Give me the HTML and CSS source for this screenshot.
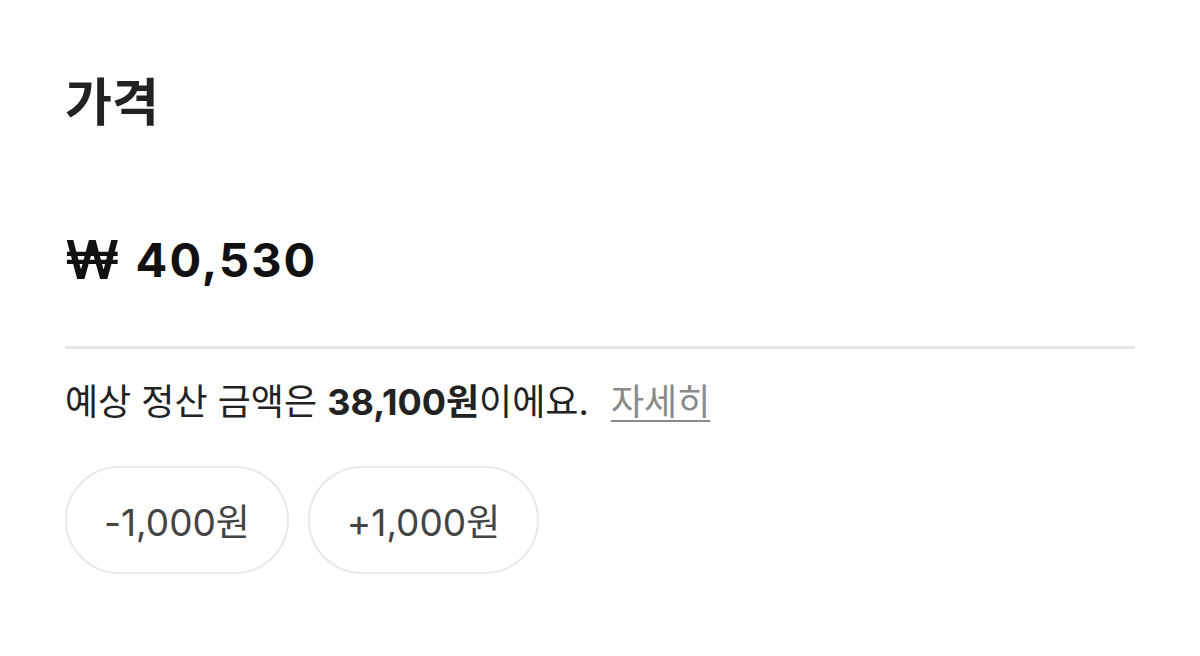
FILE: index.html
```html
<!DOCTYPE html>
<html lang="ko">
<head>
<meta charset="utf-8">
<title>가격</title>
<link rel="stylesheet" href="styles.css">
</head>
<body>
<main class="price-section">
  <h1 class="title">가격</h1>
  <div class="price-row">
    <span class="won">₩</span>
    <span class="amount">40,530</span>
  </div>
  <hr class="divider">
  <p class="settle">예상 정산 금액은 <strong>38,100원</strong>이에요. <a class="more" href="#">자세히</a></p>
  <div class="adjust">
    <button class="pill" type="button">-1,000원</button>
    <button class="pill" type="button">+1,000원</button>
  </div>
</main>
</body>
</html>
```

FILE: styles.css
```css
html, body {
  margin: 0;
  padding: 0;
  background: #ffffff;
}
body {
  font-family: "Inter", "Noto Sans CJK KR", sans-serif;
  color: #222222;
}
.price-section {
  padding: 68px 65px 0 65px;
  display: flex;
  flex-direction: column;
}
.title {
  margin: 0;
  font-family: "Noto Sans CJK KR", sans-serif;
  font-size: 51px;
  font-weight: 700;
  line-height: 62px;
  color: #222222;
}
.price-row {
  margin-top: 100px;
  display: flex;
  align-items: center;
  gap: 16px;
  height: 60px;
}
.won {
  font-family: "Inter", sans-serif;
  font-size: 54px;
  font-weight: 600;
  line-height: 60px;
  color: #111111;
}
.amount {
  font-size: 47px;
  font-weight: 700;
  line-height: 60px;
  letter-spacing: 2px;
  color: #111111;
}
.divider {
  margin: 56px 0 0 0;
  border: 0;
  height: 3px;
  background: #e6e6e6;
}
.settle {
  margin: 30px 0 0 0;
  font-size: 36px;
  line-height: 46px;
  color: #222222;
}
.settle strong {
  font-weight: 700;
}
.more {
  margin-left: 12px;
  color: #8a8a8a;
  text-decoration: underline;
  text-decoration-thickness: 2px;
  text-underline-offset: 5px;
}
.adjust {
  margin-top: 41px;
  display: flex;
  gap: 19px;
}
.pill {
  height: 108px;
  padding: 0 37px;
  border: 2px solid #e8e8e8;
  border-radius: 54px;
  background: #ffffff;
  font-family: "Inter", "Noto Sans CJK KR", sans-serif;
  font-size: 37px;
  color: #444444;
}
```
